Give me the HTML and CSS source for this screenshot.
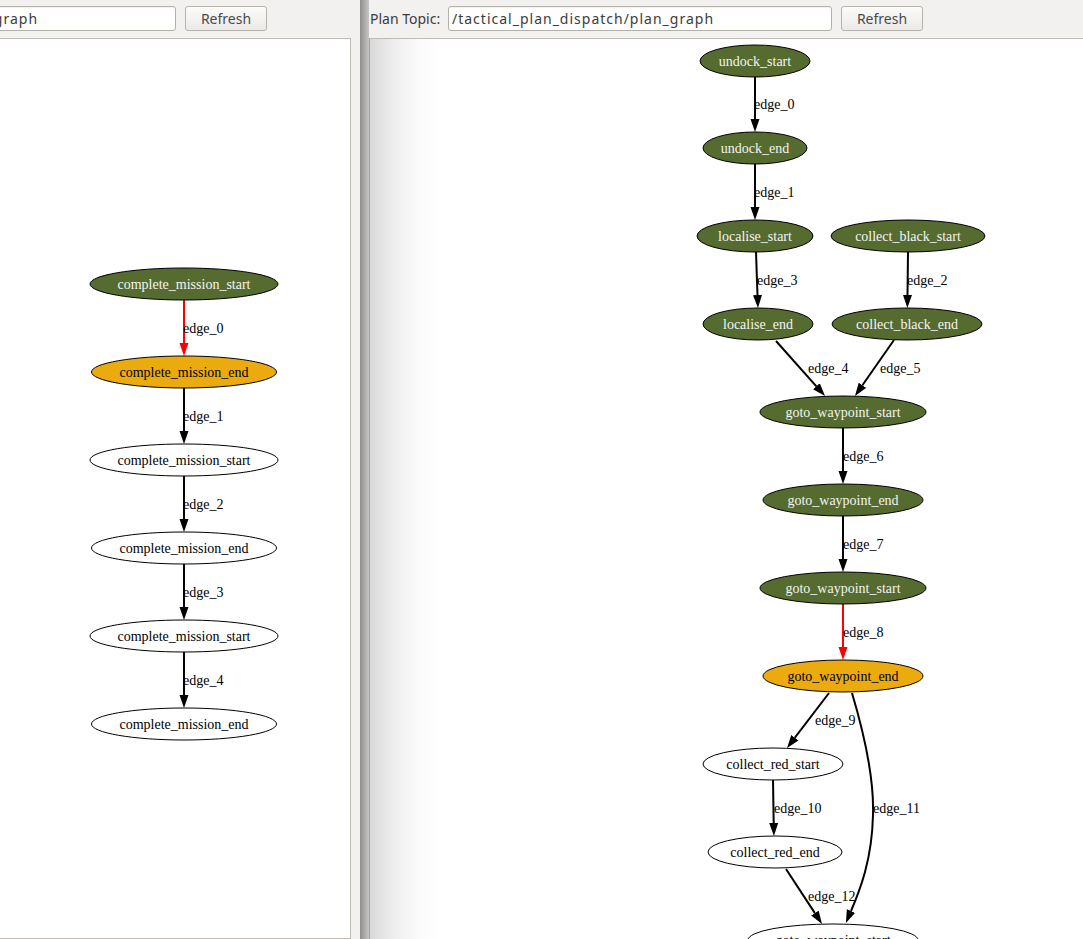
FILE: index.html
```html
<!DOCTYPE html>
<html lang="en">
<head>
    <meta charset="UTF-8">
    <title>Plan Graph</title>
    <link rel="stylesheet" href="styles.css">
</head>
<body>
<div class="app">
    <div class="pane pane-left">
        <div class="pane-inner">
            <div class="toolbar">
                <span class="topic-label">Plan Topic:</span>
                <input class="topic-input wide" type="text" value="/tactical_plan_dispatch/plan_graph">
                <button class="refresh">Refresh</button>
            </div>
            <div class="canvas">
                <svg class="graph" width="656" height="900" viewBox="-306 39 656 900">
                    <defs>
                        <marker id="arrL" markerUnits="userSpaceOnUse" viewBox="0 0 13 10" refX="0" refY="5" markerWidth="13" markerHeight="10" orient="auto">
                            <path d="M0,0.5 L13,5 L0,9.5 z" fill="#000"/>
                        </marker>
                        <marker id="arrLred" markerUnits="userSpaceOnUse" viewBox="0 0 13 10" refX="0" refY="5" markerWidth="13" markerHeight="10" orient="auto">
                            <path d="M0,0.5 L13,5 L0,9.5 z" fill="#f00"/>
                        </marker>
                    </defs>
                    <!-- edges -->
                    <path class="edge red" d="M184,300 L184,343" marker-end="url(#arrLred)"/>
                    <path class="edge" d="M184,388 L184,431" marker-end="url(#arrL)"/>
                    <path class="edge" d="M184,476 L184,519" marker-end="url(#arrL)"/>
                    <path class="edge" d="M184,564 L184,607" marker-end="url(#arrL)"/>
                    <path class="edge" d="M184,652 L184,695" marker-end="url(#arrL)"/>
                    <text class="elabel" x="183" y="333">edge_0</text>
                    <text class="elabel" x="183" y="421">edge_1</text>
                    <text class="elabel" x="183" y="509">edge_2</text>
                    <text class="elabel" x="183" y="597">edge_3</text>
                    <text class="elabel" x="183" y="685">edge_4</text>
                    <!-- nodes -->
                    <ellipse class="node done" cx="184" cy="284" rx="94" ry="16"/>
                    <text class="nlabel light" x="184" y="289">complete_mission_start</text>
                    <ellipse class="node active" cx="184" cy="372" rx="92.5" ry="16"/>
                    <text class="nlabel" x="184" y="377">complete_mission_end</text>
                    <ellipse class="node" cx="184" cy="460" rx="94" ry="16"/>
                    <text class="nlabel" x="184" y="465">complete_mission_start</text>
                    <ellipse class="node" cx="184" cy="548" rx="92.5" ry="16"/>
                    <text class="nlabel" x="184" y="553">complete_mission_end</text>
                    <ellipse class="node" cx="184" cy="636" rx="94" ry="16"/>
                    <text class="nlabel" x="184" y="641">complete_mission_start</text>
                    <ellipse class="node" cx="184" cy="724" rx="92.5" ry="16"/>
                    <text class="nlabel" x="184" y="729">complete_mission_end</text>
                </svg>
            </div>
        </div>
    </div>

    <div class="splitter"></div>

    <div class="pane pane-right">
        <div class="toolbar">
            <span class="topic-label">Plan Topic:</span>
            <input class="topic-input" type="text" value="/tactical_plan_dispatch/plan_graph">
            <button class="refresh">Refresh</button>
        </div>
        <div class="canvas shaded">
            <svg class="graph" width="739" height="900" viewBox="370 39 739 900">
                <defs>
                    <marker id="arrR" markerUnits="userSpaceOnUse" viewBox="0 0 13 10" refX="0" refY="5" markerWidth="13" markerHeight="10" orient="auto">
                        <path d="M0,0.5 L13,5 L0,9.5 z" fill="#000"/>
                    </marker>
                    <marker id="arrRred" markerUnits="userSpaceOnUse" viewBox="0 0 13 10" refX="0" refY="5" markerWidth="13" markerHeight="10" orient="auto">
                        <path d="M0,0.5 L13,5 L0,9.5 z" fill="#f00"/>
                    </marker>
                </defs>
                <!-- edges -->
                <path class="edge" d="M755,77 L755,119" marker-end="url(#arrR)"/>
                <path class="edge" d="M755,164 L755,207" marker-end="url(#arrR)"/>
                <path class="edge" d="M756,252 L757.5,295" marker-end="url(#arrR)"/>
                <path class="edge" d="M908,252 L907.5,295" marker-end="url(#arrR)"/>
                <path class="edge" d="M776,341 L816.4,386.3" marker-end="url(#arrR)"/>
                <path class="edge" d="M894,340 L862.4,385.3" marker-end="url(#arrR)"/>
                <path class="edge" d="M843,428 L843,471" marker-end="url(#arrR)"/>
                <path class="edge" d="M843,516 L843,559" marker-end="url(#arrR)"/>
                <path class="edge red" d="M843,604 L843,647" marker-end="url(#arrRred)"/>
                <path class="edge" d="M829,693 L794.9,737.7" marker-end="url(#arrR)"/>
                <path class="edge" d="M773,780 L773.7,823" marker-end="url(#arrR)"/>
                <path class="edge" d="M852,693 C866,740 874,785 873,815 C872,860 860,890 851,911" marker-end="url(#arrR)"/>
                <path class="edge" d="M786,869 L814.9,913.1" marker-end="url(#arrR)"/>

                <text class="elabel" x="754" y="109">edge_0</text>
                <text class="elabel" x="754" y="197">edge_1</text>
                <text class="elabel" x="757" y="285">edge_3</text>
                <text class="elabel" x="907" y="285">edge_2</text>
                <text class="elabel" x="808" y="373">edge_4</text>
                <text class="elabel" x="880" y="373">edge_5</text>
                <text class="elabel" x="843" y="461">edge_6</text>
                <text class="elabel" x="843" y="549">edge_7</text>
                <text class="elabel" x="843" y="637">edge_8</text>
                <text class="elabel" x="815" y="725">edge_9</text>
                <text class="elabel" x="774" y="813">edge_10</text>
                <text class="elabel" x="873" y="813">edge_11</text>
                <text class="elabel" x="808" y="901">edge_12</text>

                <!-- nodes -->
                <ellipse class="node done" cx="755" cy="61" rx="55" ry="16"/>
                <text class="nlabel light" x="755" y="66">undock_start</text>
                <ellipse class="node done" cx="755" cy="148" rx="52" ry="16"/>
                <text class="nlabel light" x="755" y="153">undock_end</text>
                <ellipse class="node done" cx="755" cy="236" rx="58" ry="16"/>
                <text class="nlabel light" x="755" y="241">localise_start</text>
                <ellipse class="node done" cx="908" cy="236" rx="77" ry="16"/>
                <text class="nlabel light" x="908" y="241">collect_black_start</text>
                <ellipse class="node done" cx="758" cy="324" rx="55" ry="16"/>
                <text class="nlabel light" x="758" y="329">localise_end</text>
                <ellipse class="node done" cx="907" cy="324" rx="75" ry="16"/>
                <text class="nlabel light" x="907" y="329">collect_black_end</text>
                <ellipse class="node done" cx="843" cy="412" rx="83" ry="16"/>
                <text class="nlabel light" x="843" y="417">goto_waypoint_start</text>
                <ellipse class="node done" cx="843" cy="500" rx="80" ry="16"/>
                <text class="nlabel light" x="843" y="505">goto_waypoint_end</text>
                <ellipse class="node done" cx="843" cy="588" rx="83" ry="16"/>
                <text class="nlabel light" x="843" y="593">goto_waypoint_start</text>
                <ellipse class="node active" cx="843" cy="676" rx="80" ry="16"/>
                <text class="nlabel" x="843" y="681">goto_waypoint_end</text>
                <ellipse class="node" cx="773" cy="764" rx="70" ry="16"/>
                <text class="nlabel" x="773" y="769">collect_red_start</text>
                <ellipse class="node" cx="775" cy="852" rx="67" ry="16"/>
                <text class="nlabel" x="775" y="857">collect_red_end</text>
                <ellipse class="node" cx="833" cy="940" rx="85" ry="16"/>
                <text class="nlabel" x="833" y="945">goto_waypoint_start</text>
            </svg>
        </div>
    </div>
</div>
</body>
</html>
```

FILE: styles.css
```css
html, body { margin: 0; padding: 0; }
body { background: #f2f1f0; width: 1083px; height: 939px; overflow: hidden; font-family: "Noto Sans", "DejaVu Sans", sans-serif; font-size: 14px; color: #3c3c3c; }

.app { display: flex; height: 939px; }

.pane { display: flex; flex-direction: column; height: 100%; }
.pane-left { width: 351px; flex: none; overflow: hidden; }
.pane-left .pane-inner { display: flex; flex-direction: column; height: 100%; width: 658px; margin-left: -307px; }
.pane-right { width: 740px; flex: none; }

.splitter { width: 18px; flex: none; background: linear-gradient(to right, #f2f1f0 0, #f2f1f0 9px, #8d8d8d 9px, #c6c6c6 18px); }

.toolbar { height: 38px; flex: none; display: flex; align-items: center; gap: 8px; box-sizing: border-box; padding-bottom: 1px; }
.topic-label { width: 70px; margin-left: 1px; white-space: nowrap; }
.topic-input { width: 384px; height: 25px; box-sizing: border-box; border: 1px solid #b3afa9; border-radius: 3px; padding: 0 3px; background: #fff; font: inherit; letter-spacing: 1px; color: #3c3c3c; box-shadow: inset 0 1px 1px rgba(0,0,0,0.06); outline: none; }
.topic-input.wide { width: 404px; }
.refresh { width: 82px; height: 25px; margin-left: 1px; box-sizing: border-box; border: 1px solid #b6b2ac; border-radius: 3px; background: linear-gradient(#fbfbfa, #ebeae8); font: inherit; color: #4a4a4a; padding: 0; }

.canvas { flex: 1; background: #fff; border: 1px solid #bfbbb5; overflow: hidden; min-height: 0; }
.canvas.shaded { border-right: none; border-bottom: none; border-color: #bfbbb5 #bfbbb5 #bfbbb5 #a3a3a3; background: linear-gradient(to right, #d9d9d9 0, #efefef 25px, #fbfbfb 50px, #fff 70px); }

.graph { display: block; font-family: "Liberation Serif", "Times New Roman", serif; font-size: 14px; }
.edge { fill: none; stroke: #000; stroke-width: 2; }
.edge.red { stroke: #f00; }
.elabel { fill: #000; }
.node { fill: #fff; stroke: #000; stroke-width: 1; }
.node.done { fill: #556b2f; }
.node.active { fill: #ebab0f; }
.nlabel { fill: #000; text-anchor: middle; }
.nlabel.light { fill: #f4f4f4; }
```
